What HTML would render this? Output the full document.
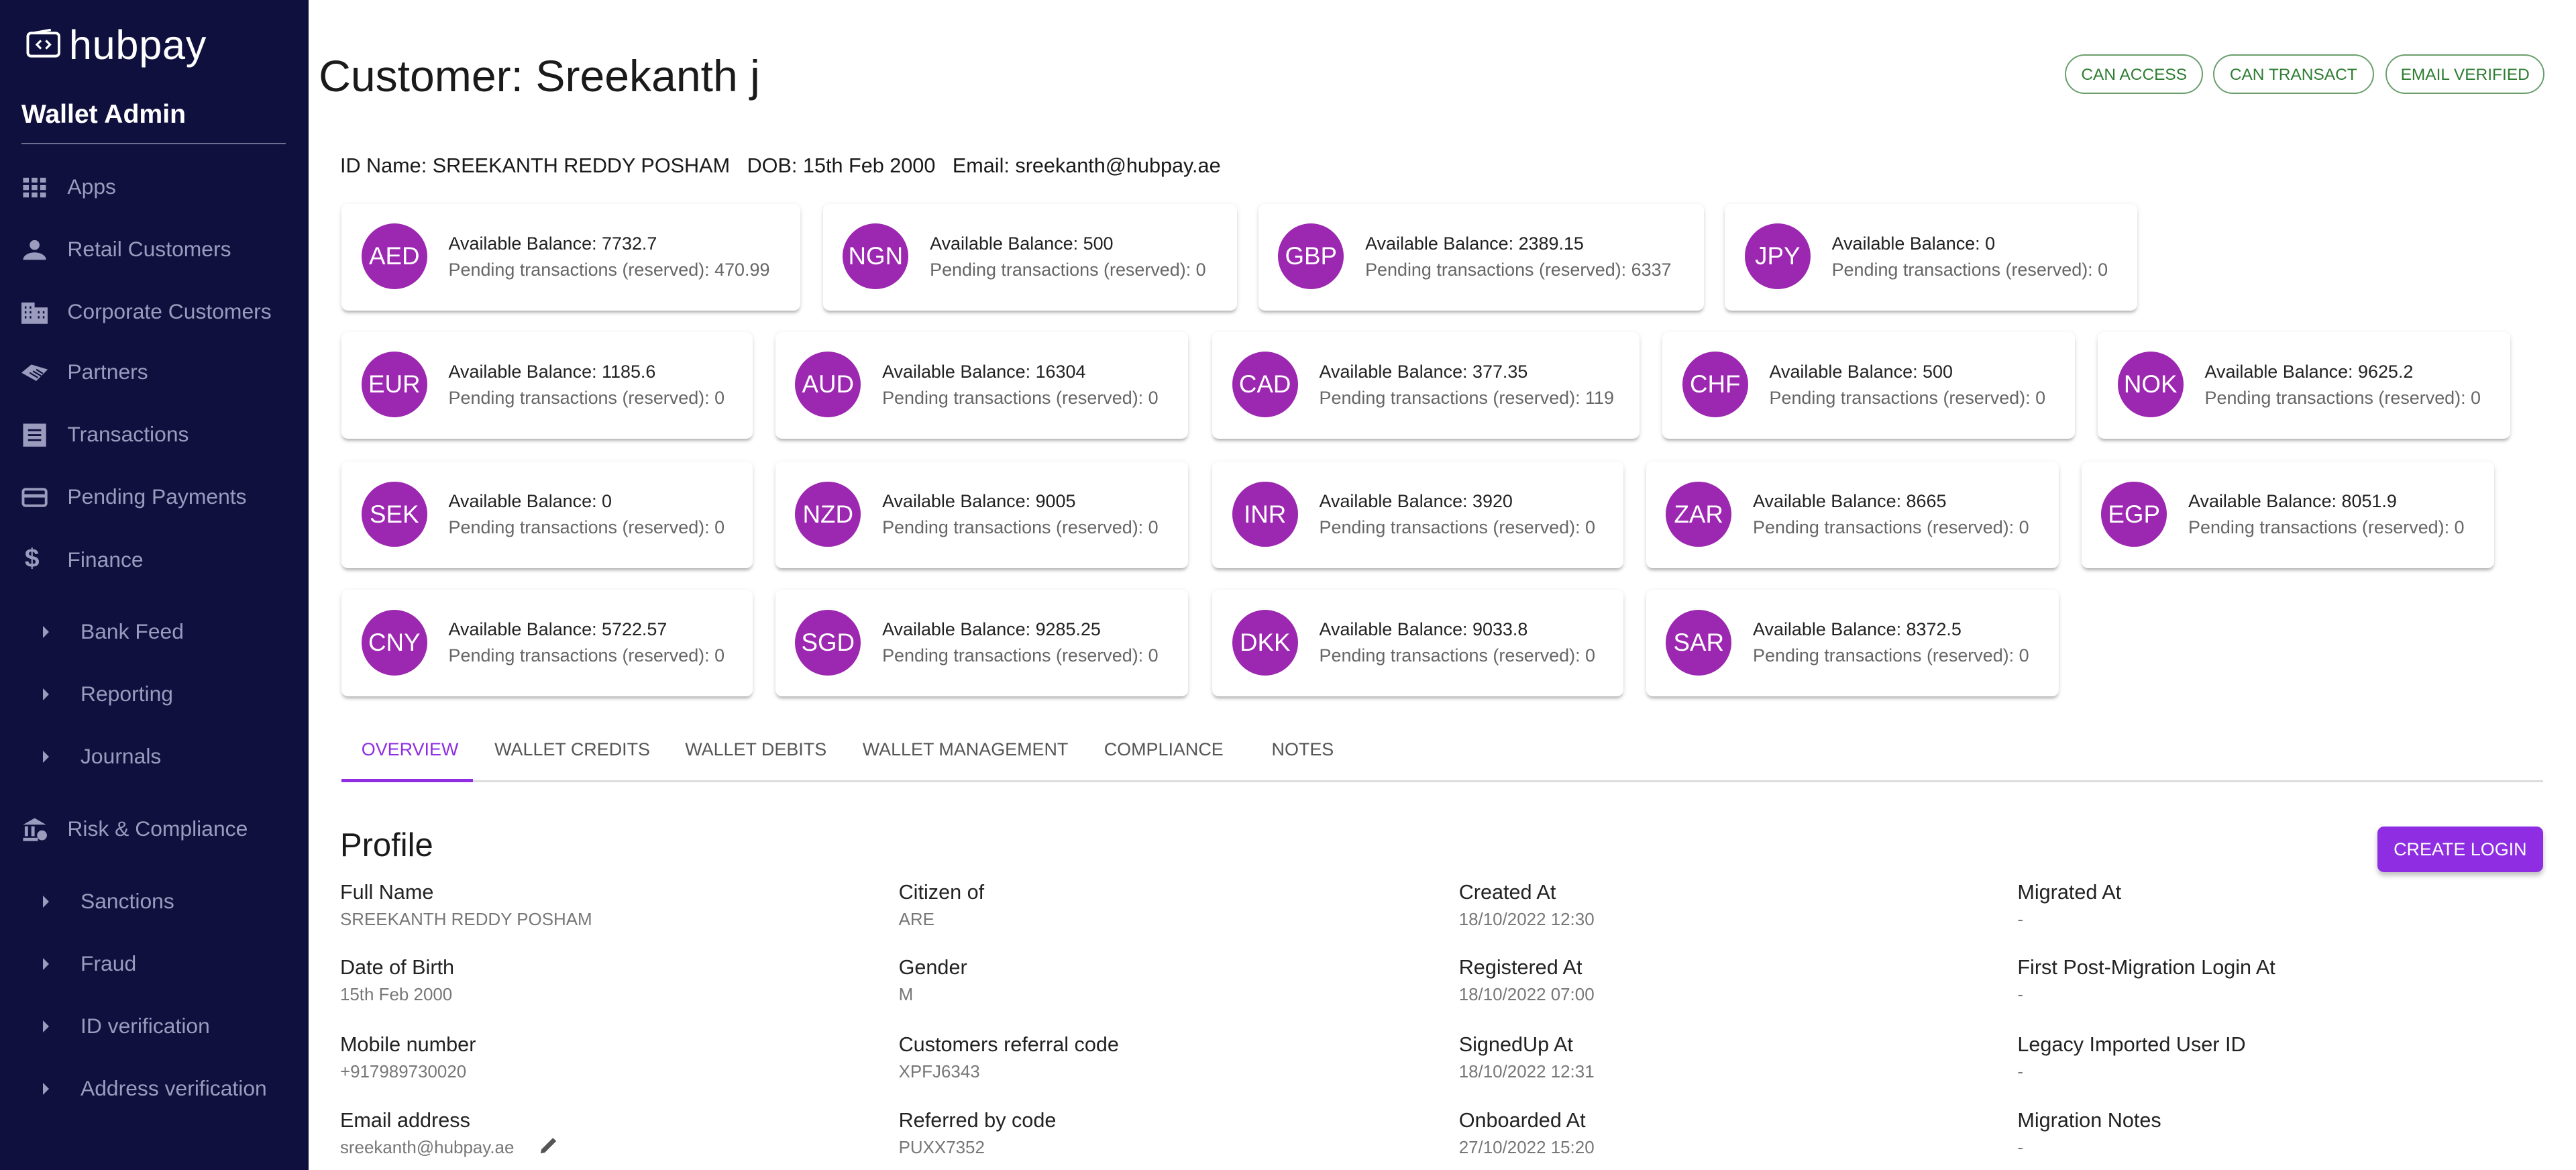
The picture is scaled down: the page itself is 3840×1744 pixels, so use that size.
<!DOCTYPE html>
<html><head><meta charset="utf-8"><style>
html,body{margin:0;padding:0;background:#fff;overflow:hidden}
body{width:3840px;height:1744px}
#r{zoom:2.44898;width:1568px;height:712px;position:relative;font-family:"Liberation Sans",sans-serif;color:#1a1a1a}
.a{position:absolute;white-space:nowrap}
#sb{position:absolute;left:0;top:0;width:188px;height:712px;background:#10103f}
.mi{position:absolute;left:41px;font-size:13px;color:#9a9bbd}
.si{position:absolute;left:49px;font-size:13px;color:#9a9bbd}
.ar{position:absolute;left:26px;width:0;height:0;border-top:4px solid transparent;border-bottom:4px solid transparent;border-left:4px solid #9a9bbd}
.ic{position:absolute;left:13px;width:16px;height:16px}
.chip{position:absolute;top:33px;height:24px;border:1px solid #6a9f6d;border-radius:13px;color:#2e7d32;font-size:10px;line-height:24px;text-align:center;box-sizing:border-box}
.card{position:absolute;height:65px;background:#fff;border-radius:4px;box-shadow:0 2px 2px -1px rgba(0,0,0,.25),0 1px 3px rgba(0,0,0,.12)}
.av{position:absolute;left:12px;top:12px;width:40px;height:40px;border-radius:50%;background:#9c27b0;color:#fff;font-size:15px;line-height:40px;text-align:center}
.t1{position:absolute;left:65px;top:18px;font-size:11px;color:#222;white-space:nowrap}
.t2{position:absolute;left:65px;top:34px;font-size:11px;color:#666;white-space:nowrap}
.tab{position:absolute;top:450px;font-size:11px;color:#555}
.lb{position:absolute;font-size:12.5px;color:#222;white-space:nowrap}
.vl{position:absolute;font-size:10.6px;color:#777;white-space:nowrap}
</style></head><body><div id="r">
<div id="sb">
<svg class="a" style="left:16px;top:17px" width="22" height="20" viewBox="0 0 22 20"><rect x="1" y="3" width="19" height="14" rx="2" fill="none" stroke="#fff" stroke-width="1.6"/><path d="M4 3 L15 1" stroke="#fff" stroke-width="1.4" fill="none"/><path d="M9 7.5 L6.5 10 L9 12.5 M12 7.5 L14.5 10 L12 12.5" stroke="#fff" stroke-width="1.3" fill="none"/></svg>
<div class="a" style="left:42px;top:13px;font-size:25px;color:#fff;letter-spacing:.3px">hubpay</div>
<div class="a" style="left:13px;top:61px;font-size:16px;color:#fff;font-weight:bold">Wallet Admin</div>
<div class="a" style="left:13px;top:87px;width:161px;height:1px;background:#6d6d8f"></div>
<svg class="ic" style="top:106px" viewBox="0 0 16 16" fill="#9a9bbd"><rect x="1" y="2" width="3.5" height="3"/><rect x="6.2" y="2" width="3.5" height="3"/><rect x="11.4" y="2" width="3.5" height="3"/><rect x="1" y="6.5" width="3.5" height="3"/><rect x="6.2" y="6.5" width="3.5" height="3"/><rect x="11.4" y="6.5" width="3.5" height="3"/><rect x="1" y="11" width="3.5" height="3"/><rect x="6.2" y="11" width="3.5" height="3"/><rect x="11.4" y="11" width="3.5" height="3"/></svg>
<div class="mi" style="top:106px">Apps</div>
<svg class="ic" style="top:144px" viewBox="0 0 16 16" fill="#9a9bbd"><circle cx="8" cy="5" r="3"/><path d="M1 14c0-3 4-4.5 7-4.5s7 1.5 7 4.5z"/></svg>
<div class="mi" style="top:144px">Retail Customers</div>
<svg class="ic" style="top:182px" viewBox="0 0 16 16"><path d="M0 2h8v3h8v10H0z" fill="#9a9bbd"/><path d="M2 5h1M5 5h1M2 8h1M5 8h1M2 11h1M5 11h1M10 8h1M10 11h1M13 8h1M13 11h1" stroke="#10103f" stroke-width="1.4"/></svg>
<div class="mi" style="top:182px">Corporate Customers</div>
<svg class="ic" style="top:219px" viewBox="0 0 16 16" fill="#9a9bbd"><path d="M0 8 L6 3 L16 6 L9 13 Z"/><path d="M5 8 L10 11 M7 7 L12 10 M9 6 L13 8.5" stroke="#10103f" stroke-width="0.9"/></svg>
<div class="mi" style="top:219px">Partners</div>
<svg class="ic" style="top:257px" viewBox="0 0 16 16" fill="#9a9bbd"><path d="M1 1h14v14H1z"/><path d="M4 5h8M4 8h8M4 11h8" stroke="#10103f" stroke-width="1.2"/></svg>
<div class="mi" style="top:257px">Transactions</div>
<svg class="ic" style="top:295px" viewBox="0 0 16 16"><rect x="1" y="3" width="14" height="10" rx="1.5" fill="none" stroke="#9a9bbd" stroke-width="1.6"/><rect x="1" y="6" width="14" height="2" fill="#9a9bbd"/></svg>
<div class="mi" style="top:295px">Pending Payments</div>
<div class="a" style="left:15px;top:331px;font-size:16px;color:#9a9bbd;font-weight:bold">$</div>
<div class="mi" style="top:333px">Finance</div>
<div class="ar" style="top:381px"></div><div class="si" style="top:377px">Bank Feed</div>
<div class="ar" style="top:419px"></div><div class="si" style="top:415px">Reporting</div>
<div class="ar" style="top:457px"></div><div class="si" style="top:453px">Journals</div>
<svg class="ic" style="top:497px" viewBox="0 0 16 16" fill="#9a9bbd"><path d="M1 5 L8 1 L15 5Z"/><rect x="2" y="6" width="2" height="6"/><rect x="6" y="6" width="2" height="6"/><rect x="1" y="13" width="9" height="2"/><circle cx="12.5" cy="11.5" r="3"/></svg>
<div class="mi" style="top:497px">Risk &amp; Compliance</div>
<div class="ar" style="top:545px"></div><div class="si" style="top:541px">Sanctions</div>
<div class="ar" style="top:583px"></div><div class="si" style="top:579px">Fraud</div>
<div class="ar" style="top:621px"></div><div class="si" style="top:617px">ID verification</div>
<div class="ar" style="top:659px"></div><div class="si" style="top:655px">Address verification</div>
</div>

<div class="a" style="left:194px;top:31px;font-size:27px;color:#1a1a1a">Customer: Sreekanth j</div>
<div class="chip" style="left:1257px;width:84px">CAN ACCESS</div>
<div class="chip" style="left:1347px;width:98px">CAN TRANSACT</div>
<div class="chip" style="left:1452px;width:97px">EMAIL VERIFIED</div>
<div class="a" style="left:207px;top:94px;font-size:12.5px">ID Name: SREEKANTH REDDY POSHAM &nbsp;&nbsp;DOB: 15th Feb 2000 &nbsp;&nbsp;Email: sreekanth@hubpay.ae</div>

<div class="card" style="left:208px;top:124px;width:279px"><div class="av">AED</div><div class="t1">Available Balance: 7732.7</div><div class="t2">Pending transactions (reserved): 470.99</div></div>
<div class="card" style="left:501px;top:124px;width:252px"><div class="av">NGN</div><div class="t1">Available Balance: 500</div><div class="t2">Pending transactions (reserved): 0</div></div>
<div class="card" style="left:766px;top:124px;width:271px"><div class="av">GBP</div><div class="t1">Available Balance: 2389.15</div><div class="t2">Pending transactions (reserved): 6337</div></div>
<div class="card" style="left:1050px;top:124px;width:251px"><div class="av">JPY</div><div class="t1">Available Balance: 0</div><div class="t2">Pending transactions (reserved): 0</div></div>

<div class="card" style="left:208px;top:202px;width:250px"><div class="av">EUR</div><div class="t1">Available Balance: 1185.6</div><div class="t2">Pending transactions (reserved): 0</div></div>
<div class="card" style="left:472px;top:202px;width:251px"><div class="av">AUD</div><div class="t1">Available Balance: 16304</div><div class="t2">Pending transactions (reserved): 0</div></div>
<div class="card" style="left:738px;top:202px;width:260px"><div class="av">CAD</div><div class="t1">Available Balance: 377.35</div><div class="t2">Pending transactions (reserved): 119</div></div>
<div class="card" style="left:1012px;top:202px;width:251px"><div class="av">CHF</div><div class="t1">Available Balance: 500</div><div class="t2">Pending transactions (reserved): 0</div></div>
<div class="card" style="left:1277px;top:202px;width:251px"><div class="av">NOK</div><div class="t1">Available Balance: 9625.2</div><div class="t2">Pending transactions (reserved): 0</div></div>

<div class="card" style="left:208px;top:281px;width:250px"><div class="av">SEK</div><div class="t1">Available Balance: 0</div><div class="t2">Pending transactions (reserved): 0</div></div>
<div class="card" style="left:472px;top:281px;width:251px"><div class="av">NZD</div><div class="t1">Available Balance: 9005</div><div class="t2">Pending transactions (reserved): 0</div></div>
<div class="card" style="left:738px;top:281px;width:250px"><div class="av">INR</div><div class="t1">Available Balance: 3920</div><div class="t2">Pending transactions (reserved): 0</div></div>
<div class="card" style="left:1002px;top:281px;width:251px"><div class="av">ZAR</div><div class="t1">Available Balance: 8665</div><div class="t2">Pending transactions (reserved): 0</div></div>
<div class="card" style="left:1267px;top:281px;width:251px"><div class="av">EGP</div><div class="t1">Available Balance: 8051.9</div><div class="t2">Pending transactions (reserved): 0</div></div>

<div class="card" style="left:208px;top:359px;width:250px"><div class="av">CNY</div><div class="t1">Available Balance: 5722.57</div><div class="t2">Pending transactions (reserved): 0</div></div>
<div class="card" style="left:472px;top:359px;width:251px"><div class="av">SGD</div><div class="t1">Available Balance: 9285.25</div><div class="t2">Pending transactions (reserved): 0</div></div>
<div class="card" style="left:738px;top:359px;width:250px"><div class="av">DKK</div><div class="t1">Available Balance: 9033.8</div><div class="t2">Pending transactions (reserved): 0</div></div>
<div class="card" style="left:1002px;top:359px;width:251px"><div class="av">SAR</div><div class="t1">Available Balance: 8372.5</div><div class="t2">Pending transactions (reserved): 0</div></div>

<div class="tab" style="left:220px;color:#8e2de2">OVERVIEW</div>
<div class="tab" style="left:301px">WALLET CREDITS</div>
<div class="tab" style="left:417px">WALLET DEBITS</div>
<div class="tab" style="left:525px">WALLET MANAGEMENT</div>
<div class="tab" style="left:672px">COMPLIANCE</div>
<div class="tab" style="left:774px">NOTES</div>
<div class="a" style="left:208px;top:475px;width:1340px;height:1px;background:#ddd"></div>
<div class="a" style="left:208px;top:474px;width:80px;height:2px;background:#8e2de2"></div>

<div class="a" style="left:207px;top:503px;font-size:20px">Profile</div>
<div class="a" style="left:1447px;top:503px;width:101px;height:28px;background:#8e2de2;border-radius:4px;color:#fff;font-size:11px;line-height:28px;text-align:center;box-shadow:0 2px 3px rgba(0,0,0,.25)">CREATE LOGIN</div>

<div class="lb" style="left:207px;top:536px">Full Name</div><div class="vl" style="left:207px;top:554px">SREEKANTH REDDY POSHAM</div>
<div class="lb" style="left:207px;top:582px">Date of Birth</div><div class="vl" style="left:207px;top:600px">15th Feb 2000</div>
<div class="lb" style="left:207px;top:629px">Mobile number</div><div class="vl" style="left:207px;top:647px">+917989730020</div>
<div class="lb" style="left:207px;top:675px">Email address</div><div class="vl" style="left:207px;top:693px">sreekanth@hubpay.ae</div>
<svg class="a" style="left:327px;top:690px" width="14" height="14" viewBox="0 0 14 14"><path d="M2 12 L2.5 9.5 L9.5 2.5 L11.5 4.5 L4.5 11.5 Z" fill="#555"/></svg>

<div class="lb" style="left:547px;top:536px">Citizen of</div><div class="vl" style="left:547px;top:554px">ARE</div>
<div class="lb" style="left:547px;top:582px">Gender</div><div class="vl" style="left:547px;top:600px">M</div>
<div class="lb" style="left:547px;top:629px">Customers referral code</div><div class="vl" style="left:547px;top:647px">XPFJ6343</div>
<div class="lb" style="left:547px;top:675px">Referred by code</div><div class="vl" style="left:547px;top:693px">PUXX7352</div>

<div class="lb" style="left:888px;top:536px">Created At</div><div class="vl" style="left:888px;top:554px">18/10/2022 12:30</div>
<div class="lb" style="left:888px;top:582px">Registered At</div><div class="vl" style="left:888px;top:600px">18/10/2022 07:00</div>
<div class="lb" style="left:888px;top:629px">SignedUp At</div><div class="vl" style="left:888px;top:647px">18/10/2022 12:31</div>
<div class="lb" style="left:888px;top:675px">Onboarded At</div><div class="vl" style="left:888px;top:693px">27/10/2022 15:20</div>

<div class="lb" style="left:1228px;top:536px">Migrated At</div><div class="vl" style="left:1228px;top:554px">-</div>
<div class="lb" style="left:1228px;top:582px">First Post-Migration Login At</div><div class="vl" style="left:1228px;top:600px">-</div>
<div class="lb" style="left:1228px;top:629px">Legacy Imported User ID</div><div class="vl" style="left:1228px;top:647px">-</div>
<div class="lb" style="left:1228px;top:675px">Migration Notes</div><div class="vl" style="left:1228px;top:693px">-</div>
</div></body></html>
